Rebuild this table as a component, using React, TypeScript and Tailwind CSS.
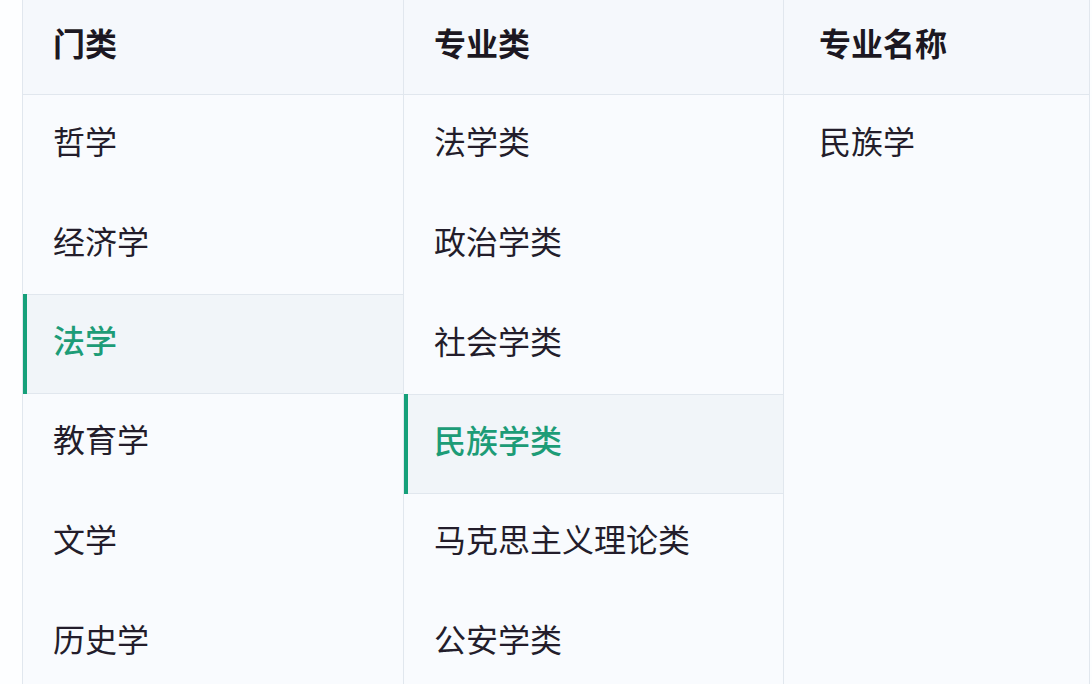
const categories = ["哲学", "经济学", "法学", "教育学", "文学", "历史学"];
const classes = ["法学类", "政治学类", "社会学类", "民族学类", "马克思主义理论类", "公安学类"];
const majors = ["民族学"];

function Cell({ label, active, pad }: { label: string; active?: boolean; pad: string }) {
  return (
    <div
      className={
        active
          ? "relative h-[100px] flex items-center border-y border-[#e1e7ee] bg-[#f1f5f9] text-[#1d9c77] font-medium -my-px"
          : "h-[100px] flex items-center text-[#231d2b]"
      }
    >
      {active && <span className="absolute left-0 -top-px -bottom-px w-[4px] bg-[#16a07a]" />}
      <span className={`pb-[11px] ${pad}`}>{label}</span>
    </div>
  );
}

function Column({
  title,
  items,
  activeIndex,
  pad = "pl-[30px]",
  className = "",
}: {
  title: string;
  items: string[];
  activeIndex?: number;
  pad?: string;
  className?: string;
}) {
  return (
    <div className={`flex flex-col border-l border-[#e1e7ee] ${className}`}>
      <div className={`h-[95px] shrink-0 flex items-center border-b border-[#e1e7ee] bg-[#f5f8fc] font-bold text-[#1c1822] pb-[11px] ${pad}`}>
        {title}
      </div>
      <div className="flex-1 bg-[#f9fbfe]">
        {items.map((item, i) => (
          <Cell key={item} label={item} active={i === activeIndex} pad={pad} />
        ))}
      </div>
    </div>
  );
}

export default function App() {
  return (
    <div
      className="w-[1092px] h-[684px] overflow-hidden bg-[#fdfeff] pl-[22px] flex text-[32px] leading-none"
      style={{ fontFamily: '"Noto Sans CJK SC", "Noto Sans", sans-serif' }}
    >
      <Column title="门类" items={categories} activeIndex={2} className="w-[381px]" />
      <Column title="专业类" items={classes} activeIndex={3} className="w-[380px]" />
      <Column title="专业名称" items={majors} pad="pl-[35px]" className="w-[307px] border-r" />
    </div>
  );
}
